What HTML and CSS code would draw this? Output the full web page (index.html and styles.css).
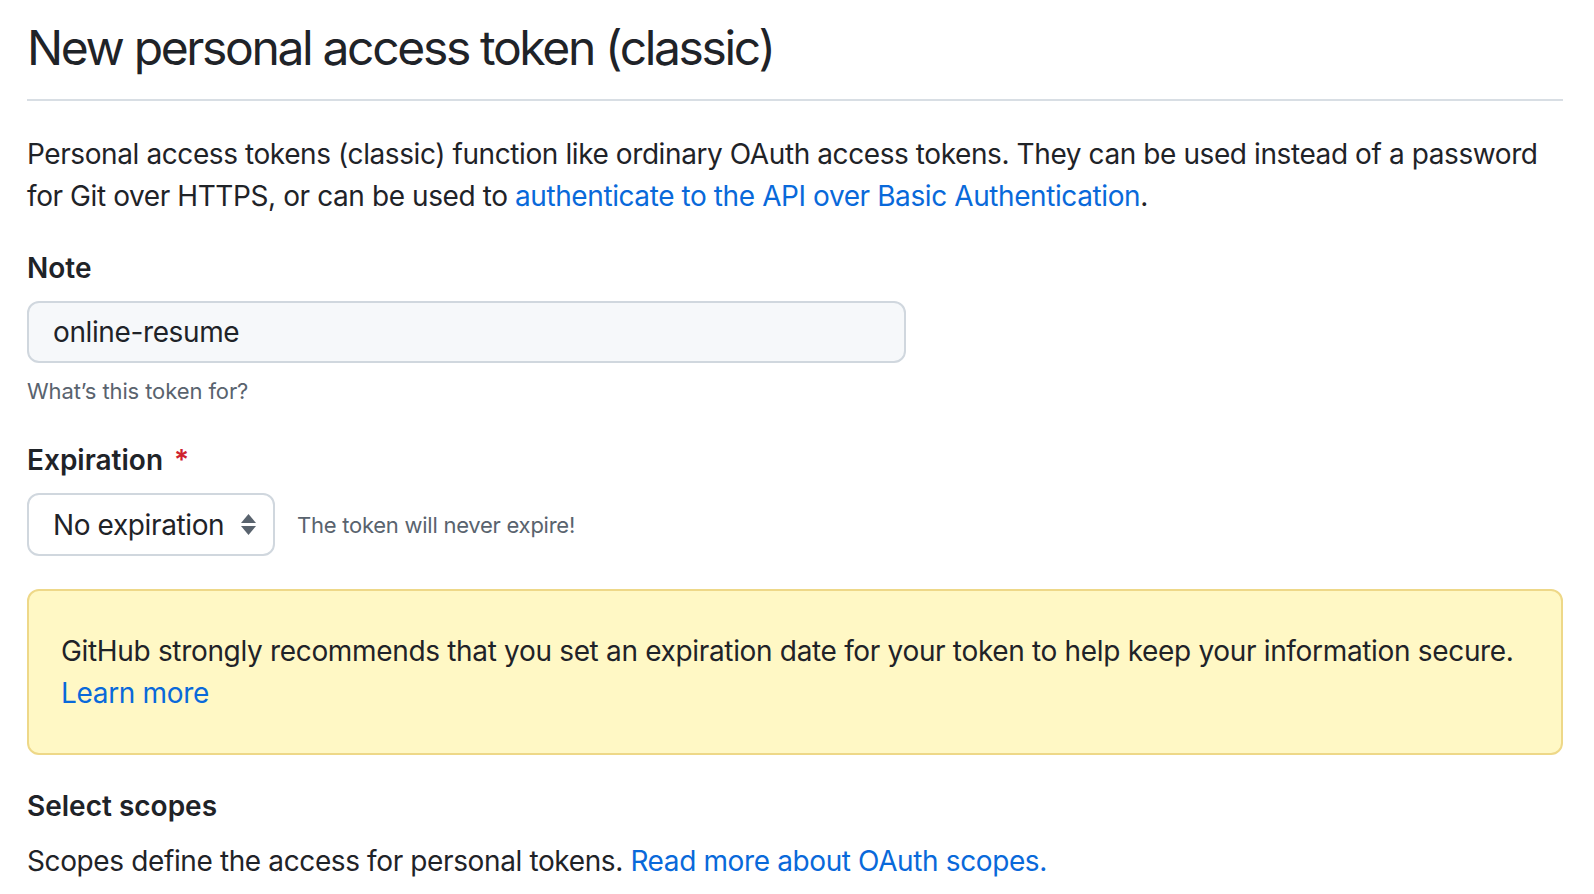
FILE: index.html
```html
<!DOCTYPE html>
<html lang="en">
<head>
<meta charset="utf-8">
<title>New personal access token (classic)</title>
<link rel="stylesheet" href="styles.css">
</head>
<body>
<main class="page">
  <div class="subhead">
    <h1 class="subhead-heading">New personal access token (classic)</h1>
  </div>
  <p class="intro">Personal access tokens (classic) function like ordinary OAuth access tokens. They can be used instead of a password for Git over HTTPS, or can be used to <a href="#">authenticate to the API over Basic Authentication</a>.</p>

  <div class="form-group">
    <label class="label">Note</label>
    <div class="input">online-resume</div>
    <p class="note">What’s this token for?</p>
  </div>

  <div class="form-group expiration">
    <label class="label">Expiration <span class="req">*</span></label>
    <div class="select-row">
      <div class="select">
        <span>No expiration</span>
        <svg class="arrows" width="15" height="21" viewBox="0 0 15 21"><path d="M7.5 0 L15 9 L0 9 Z" fill="#59636e"/><path d="M7.5 21 L15 12 L0 12 Z" fill="#59636e"/></svg>
      </div>
      <span class="select-note">The token will never expire!</span>
    </div>
  </div>

  <div class="flash">
    GitHub strongly recommends that you set an expiration date for your token to help keep your information secure.<br>
    <a href="#">Learn more</a>
  </div>

  <h3 class="scopes-title">Select scopes</h3>
  <p class="scopes-text">Scopes define the access for personal tokens. <a href="#">Read more about OAuth scopes.</a></p>
</main>
</body>
</html>
```

FILE: styles.css
```css
html, body {
  margin: 0;
  padding: 0;
  background: #ffffff;
}
body {
  font-family: Inter, "Noto Sans", "Liberation Sans", sans-serif;
  color: #1f2328;
  font-size: 28px;
  line-height: 42px;
  letter-spacing: -0.38px;
}
a {
  color: #0969da;
  text-decoration: none;
}
.page {
  width: 1536px;
  padding: 18px 0 0 27px;
}
.subhead {
  border-bottom: 2px solid #d8dee4;
  padding-bottom: 21px;
}
.subhead-heading {
  margin: 0;
  font-size: 48px;
  font-weight: 400;
  line-height: 60px;
  letter-spacing: -2.35px;
}
.intro {
  margin: 32px 0 0 0;
  letter-spacing: -0.41px;
}
.form-group {
  margin-top: 30px;
}
.label {
  display: block;
  font-weight: 600;
  line-height: 42px;
  margin-bottom: 12px;
  letter-spacing: 0;
}
.req {
  color: #cf222e;
  margin-left: 4px;
}
.input {
  width: 879px;
  box-sizing: border-box;
  height: 62px;
  background: #f6f8fa;
  border: 2px solid #d0d7de;
  border-radius: 12px;
  padding: 0 24px;
  display: flex;
  align-items: center;
}
.note {
  margin: 10px 0 0 0;
  font-size: 22px;
  line-height: 36px;
  color: #59636e;
  letter-spacing: -0.1px;
}
.expiration {
  margin-top: 30px;
}
.select-row {
  display: flex;
  align-items: center;
  gap: 22px;
}
.select {
  width: 248px;
  box-sizing: border-box;
  height: 63px;
  border: 2px solid #d0d7de;
  border-radius: 12px;
  padding: 0 17px 0 24px;
  display: flex;
  align-items: center;
  justify-content: space-between;
  background: #ffffff;
}
.arrows {
  display: block;
}
.select-note {
  font-size: 22px;
  color: #59636e;
  letter-spacing: -0.25px;
}
.flash {
  margin-top: 33px;
  background: #fff8c5;
  border: 2px solid #eed888;
  border-radius: 12px;
  padding: 39px 32px;
  letter-spacing: -0.33px;
}
.scopes-title {
  margin: 30px 0 0 0;
  font-size: 28px;
  font-weight: 600;
  line-height: 42px;
  letter-spacing: 0;
}
.scopes-text {
  margin: 13px 0 0 0;
}
```
